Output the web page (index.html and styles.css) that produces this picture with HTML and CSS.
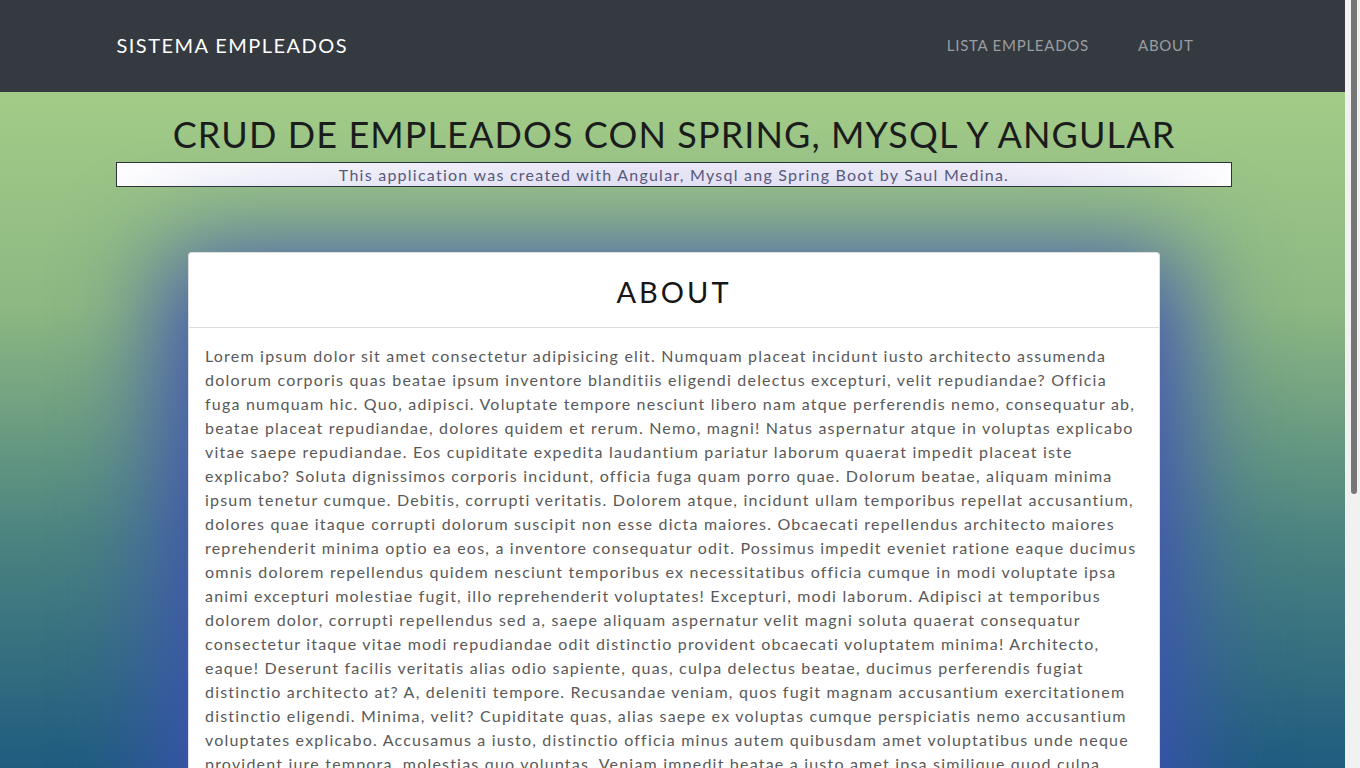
FILE: index.html
```html
<!DOCTYPE html>
<html lang="es">
<head>
<meta charset="utf-8">
<title>Sistema Empleados</title>
<link rel="stylesheet" href="styles.css">
</head>
<body>
<header class="navbar">
  <div class="navbar-inner">
    <a class="brand" href="#">SISTEMA EMPLEADOS</a>
    <nav class="nav">
      <a class="nav-link" href="#">LISTA EMPLEADOS</a>
      <a class="nav-link" href="#">ABOUT</a>
    </nav>
  </div>
</header>
<main class="main">
  <h1 class="title">CRUD DE EMPLEADOS CON SPRING, MYSQL Y ANGULAR</h1>
  <p class="subtitle">This application was created with Angular, Mysql ang Spring Boot by Saul Medina.</p>
  <section class="card">
    <div class="card-header"><h2 class="card-title">ABOUT</h2></div>
    <div class="card-body">
      <p class="about-text">Lorem ipsum dolor sit amet consectetur adipisicing elit. Numquam placeat incidunt iusto architecto assumenda dolorum corporis quas beatae ipsum inventore blanditiis eligendi delectus excepturi, velit repudiandae? Officia fuga numquam hic. Quo, adipisci. Voluptate tempore nesciunt libero nam atque perferendis nemo, consequatur ab, beatae placeat repudiandae, dolores quidem et rerum. Nemo, magni! Natus aspernatur atque in voluptas explicabo vitae saepe repudiandae. Eos cupiditate expedita laudantium pariatur laborum quaerat impedit placeat iste explicabo? Soluta dignissimos corporis incidunt, officia fuga quam porro quae. Dolorum beatae, aliquam minima ipsum tenetur cumque. Debitis, corrupti veritatis. Dolorem atque, incidunt ullam temporibus repellat accusantium, dolores quae itaque corrupti dolorum suscipit non esse dicta maiores. Obcaecati repellendus architecto maiores reprehenderit minima optio ea eos, a inventore consequatur odit. Possimus impedit eveniet ratione eaque ducimus omnis dolorem repellendus quidem nesciunt temporibus ex necessitatibus officia cumque in modi voluptate ipsa animi excepturi molestiae fugit, illo reprehenderit voluptates! Excepturi, modi laborum. Adipisci at temporibus dolorem dolor, corrupti repellendus sed a, saepe aliquam aspernatur velit magni soluta quaerat consequatur consectetur itaque vitae modi repudiandae odit distinctio provident obcaecati voluptatem minima! Architecto, eaque! Deserunt facilis veritatis alias odio sapiente, quas, culpa delectus beatae, ducimus perferendis fugiat distinctio architecto at? A, deleniti tempore. Recusandae veniam, quos fugit magnam accusantium exercitationem distinctio eligendi. Minima, velit? Cupiditate quas, alias saepe ex voluptas cumque perspiciatis nemo accusantium voluptates explicabo. Accusamus a iusto, distinctio officia minus autem quibusdam amet voluptatibus unde neque provident iure tempora, molestias quo voluptas. Veniam impedit beatae a iusto amet ipsa similique quod culpa nobis, ab dolore fugiat nostrum quis repellat eius? Quasi, harum esse. Laboriosam dolorum, quibusdam sint nihil ducimus aut quo debitis error asperiores eveniet, vero inventore sequi nesciunt rem. Nihil, quas voluptatum officiis explicabo sapiente ipsum laudantium, consequuntur repellendus aperiam reiciendis fugit voluptas maiores rerum. Quam sunt ad doloremque accusamus, tempora expedita sequi error modi nulla perspiciatis numquam voluptatibus vel nesciunt quaerat. Magnam, placeat quo rerum fuga dolores harum illum ratione deserunt ipsa tempora enim similique eaque, molestiae totam laboriosam. Facere, iure atque veniam quia cum distinctio voluptatem tenetur optio aliquid vitae, dolorem ipsam, quidem ducimus recusandae. Quod nemo dolore reprehenderit fugiat obcaecati, minima ea ab veniam repellat ipsum itaque voluptatum laborum id debitis sunt impedit. Molestias laudantium atque odit nisi, voluptatibus cupiditate ex perferendis similique soluta, quos corrupti sequi fugiat.</p>
    </div>
  </section>
</main>
<div class="scrollbar" aria-hidden="true"><div class="scrollbar-thumb"></div></div>
</body>
</html>
```

FILE: styles.css
```css
html {
  background: linear-gradient(to bottom, #acd48a 0%, #8db882 40%, #4b8380 70%, #1f5c7f 100%) fixed;
  min-height: 100%;
}

body {
  margin: 0 15px 0 0;
  font-family: Lato, "Noto Sans", sans-serif;
  color: #212529;
}

.navbar {
  background: #343a40;
  height: 92px;
  display: flex;
  align-items: center;
}

.navbar-inner {
  width: 1110px;
  margin: 0 auto;
  display: flex;
  align-items: center;
  justify-content: space-between;
  padding-bottom: 3px;
}

.brand {
  color: #ffffff;
  text-decoration: none;
  font-size: 20px;
  letter-spacing: 1.45px;
  line-height: 30px;
  margin-left: -1px;
}

.nav {
  display: flex;
  gap: 33px;
  margin-right: 26px;
  padding-top: 1px;
}

.nav-link {
  color: #9a9da1;
  text-decoration: none;
  font-size: 15px;
  letter-spacing: 0.75px;
  padding: 0 8px;
  line-height: 24px;
}

.main {
  display: flex;
  flex-direction: column;
  align-items: center;
  padding: 0 0 40px 3px;
}

.title {
  margin: 20px 0 6px;
  font-size: 36px;
  font-weight: 400;
  line-height: 44px;
  letter-spacing: 1.1px;
  color: #1b1d1c;
  text-align: center;
}

.subtitle {
  box-sizing: border-box;
  width: 1116px;
  margin: 0;
  border: 1px solid #2f3338;
  background: linear-gradient(to right, #ffffff 0%, #efecf8 45%, #f3f0fa 75%, #ffffff 100%);
  color: #5a5a7a;
  font-size: 16px;
  line-height: 23px;
  letter-spacing: 1.25px;
  text-align: center;
}

.card {
  box-sizing: border-box;
  width: 972px;
  margin-top: 65px;
  background: #ffffff;
  border: 1px solid rgba(0, 0, 0, 0.125);
  border-radius: 4px;
  box-shadow: 0 25px 100px 25px #3f51b5;
}

.card-header {
  padding: 22px 16px 18px;
  border-bottom: 1px solid #dcdcdc;
}

.card-title {
  margin: 0;
  font-size: 29px;
  font-weight: 400;
  line-height: 34px;
  letter-spacing: 3px;
  text-align: center;
  color: #161616;
}

.card-body {
  padding: 16px;
}

.about-text {
  margin: 0;
  font-size: 16px;
  line-height: 24px;
  letter-spacing: 1.2px;
  color: #595959;
}

.scrollbar {
  position: fixed;
  top: 0;
  right: 0;
  width: 15px;
  height: 100vh;
  background: #f1f1f1;
}

.scrollbar-thumb {
  margin: 0 3px 0 6px;
  height: 494px;
  background: #767676;
  border-radius: 0 0 3px 3px;
}
```
